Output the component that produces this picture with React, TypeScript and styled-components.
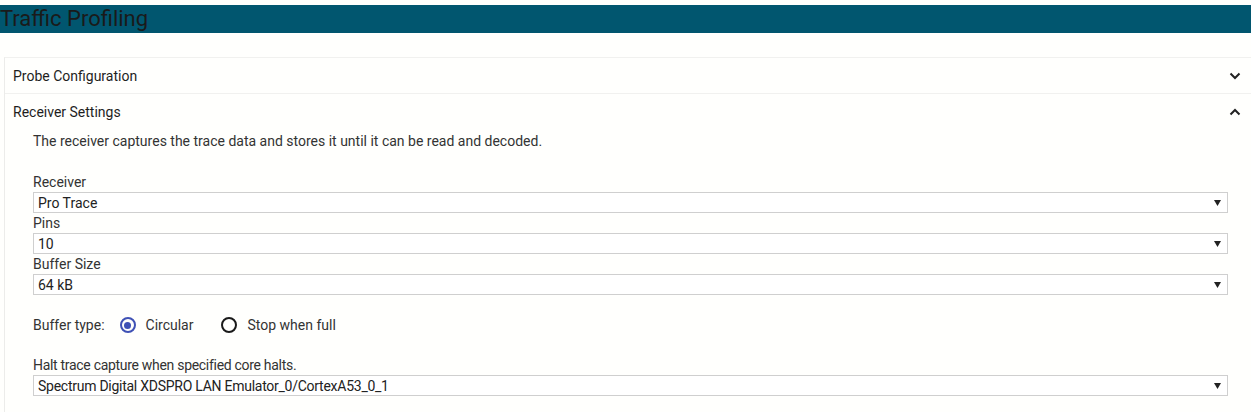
import React from "react";
import styled, { createGlobalStyle } from "styled-components";

const Global = createGlobalStyle`
  html, body {
    margin: 0;
    padding: 0;
    background: #fffffd;
    font-family: Roboto, "Liberation Sans", Arial, sans-serif;
    color: #333;
  }
`;

const Page = styled.div`
  padding-top: 5px;
  width: 1251px;
`;

const TitleBar = styled.div`
  height: 28px;
  background: #01566f;
  display: flex;
  align-items: center;
`;

const Title = styled.h1`
  margin: 0;
  font-size: 22px;
  font-weight: 400;
  color: #1a1a1a;
  line-height: 28px;
`;

const Accordion = styled.div`
  margin-top: 24px;
  margin-left: 4px;
  border-left: 1px solid #ececea;
  border-top: 1px solid #f1f1ef;
`;

const Section = styled.section<{ $first?: boolean }>`
  border-top: ${(p) => (p.$first ? "none" : "1px solid #f1f1ef")};
`;

const SectionHeader = styled.div`
  height: 35px;
  display: flex;
  align-items: center;
  justify-content: space-between;
  padding: 0 10px 0 8px;
`;

const SectionTitle = styled.span`
  font-size: 14px;
  font-weight: 400;
  color: #1e1e1e;
`;

const Body = styled.div`
  padding: 4px 23px 16px 28px;
`;

const Description = styled.p`
  margin: 0 0 23px 0;
  font-size: 14px;
  line-height: 16px;
  color: #333;
`;

const FieldLabel = styled.div<{ $tight?: boolean }>`
  font-size: 14px;
  line-height: 20px;
  height: 20px;
  color: #333;
  letter-spacing: ${(p) => (p.$tight ? "-0.3px" : "0")};
`;

const SelectBox = styled.div<{ $tight?: boolean }>`
  height: 19px;
  border: 1px solid #cfcfcf;
  background: #fff;
  display: flex;
  align-items: center;
  justify-content: space-between;
  padding: 0 6px 0 4px;
  font-size: 14px;
  color: #222;
  letter-spacing: ${(p) => (p.$tight ? "-0.26px" : "0")};
`;

const RadioRow = styled.div`
  margin-top: 20px;
  margin-bottom: 20px;
  height: 20px;
  display: flex;
  align-items: center;
  font-size: 14px;
  color: #333;
`;

const RadioLabel = styled.span`
  margin-right: 15px;
`;

const RadioOption = styled.label`
  display: flex;
  align-items: center;
  margin-right: 28px;
  gap: 10px;
`;

const RadioCircle = styled.span<{ $checked?: boolean }>`
  width: 12px;
  height: 12px;
  border-radius: 50%;
  border: 2px solid ${(p) => (p.$checked ? "#3f51b5" : "#1a1a1a")};
  display: flex;
  align-items: center;
  justify-content: center;
  &::after {
    content: "";
    width: 7px;
    height: 7px;
    border-radius: 50%;
    background: ${(p) => (p.$checked ? "#3f51b5" : "transparent")};
  }
`;

const Chevron = ({ up }: { up?: boolean }) => (
  <svg width="12" height="8" viewBox="0 0 12 8">
    <path
      d={up ? "M1.5 6.5 L6 2 L10.5 6.5" : "M1.5 1.5 L6 6 L10.5 1.5"}
      fill="none"
      stroke="#222"
      strokeWidth="2"
    />
  </svg>
);

const Arrow = () => (
  <svg width="7" height="6" viewBox="0 0 7 6">
    <polygon points="0,0 7,0 3.5,6" fill="#222" />
  </svg>
);

const Select = ({ value, tight }: { value: string; tight?: boolean }) => (
  <SelectBox $tight={tight}>
    <span>{value}</span>
    <Arrow />
  </SelectBox>
);

export default function App() {
  return (
    <>
      <Global />
      <Page>
        <TitleBar>
          <Title>Traffic Profiling</Title>
        </TitleBar>
        <Accordion>
          <Section $first>
            <SectionHeader>
              <SectionTitle>Probe Configuration</SectionTitle>
              <Chevron />
            </SectionHeader>
          </Section>
          <Section>
            <SectionHeader>
              <SectionTitle>Receiver Settings</SectionTitle>
              <Chevron up />
            </SectionHeader>
            <Body>
              <Description>
                The receiver captures the trace data and stores it until it can be read and decoded.
              </Description>
              <FieldLabel>Receiver</FieldLabel>
              <Select value="Pro Trace" />
              <FieldLabel>Pins</FieldLabel>
              <Select value="10" />
              <FieldLabel>Buffer Size</FieldLabel>
              <Select value="64 kB" />
              <RadioRow>
                <RadioLabel>Buffer type:</RadioLabel>
                <RadioOption>
                  <RadioCircle $checked />
                  Circular
                </RadioOption>
                <RadioOption>
                  <RadioCircle />
                  Stop when full
                </RadioOption>
              </RadioRow>
              <FieldLabel $tight>Halt trace capture when specified core halts.</FieldLabel>
              <Select tight value="Spectrum Digital XDSPRO LAN Emulator_0/CortexA53_0_1" />
            </Body>
          </Section>
        </Accordion>
      </Page>
    </>
  );
}
